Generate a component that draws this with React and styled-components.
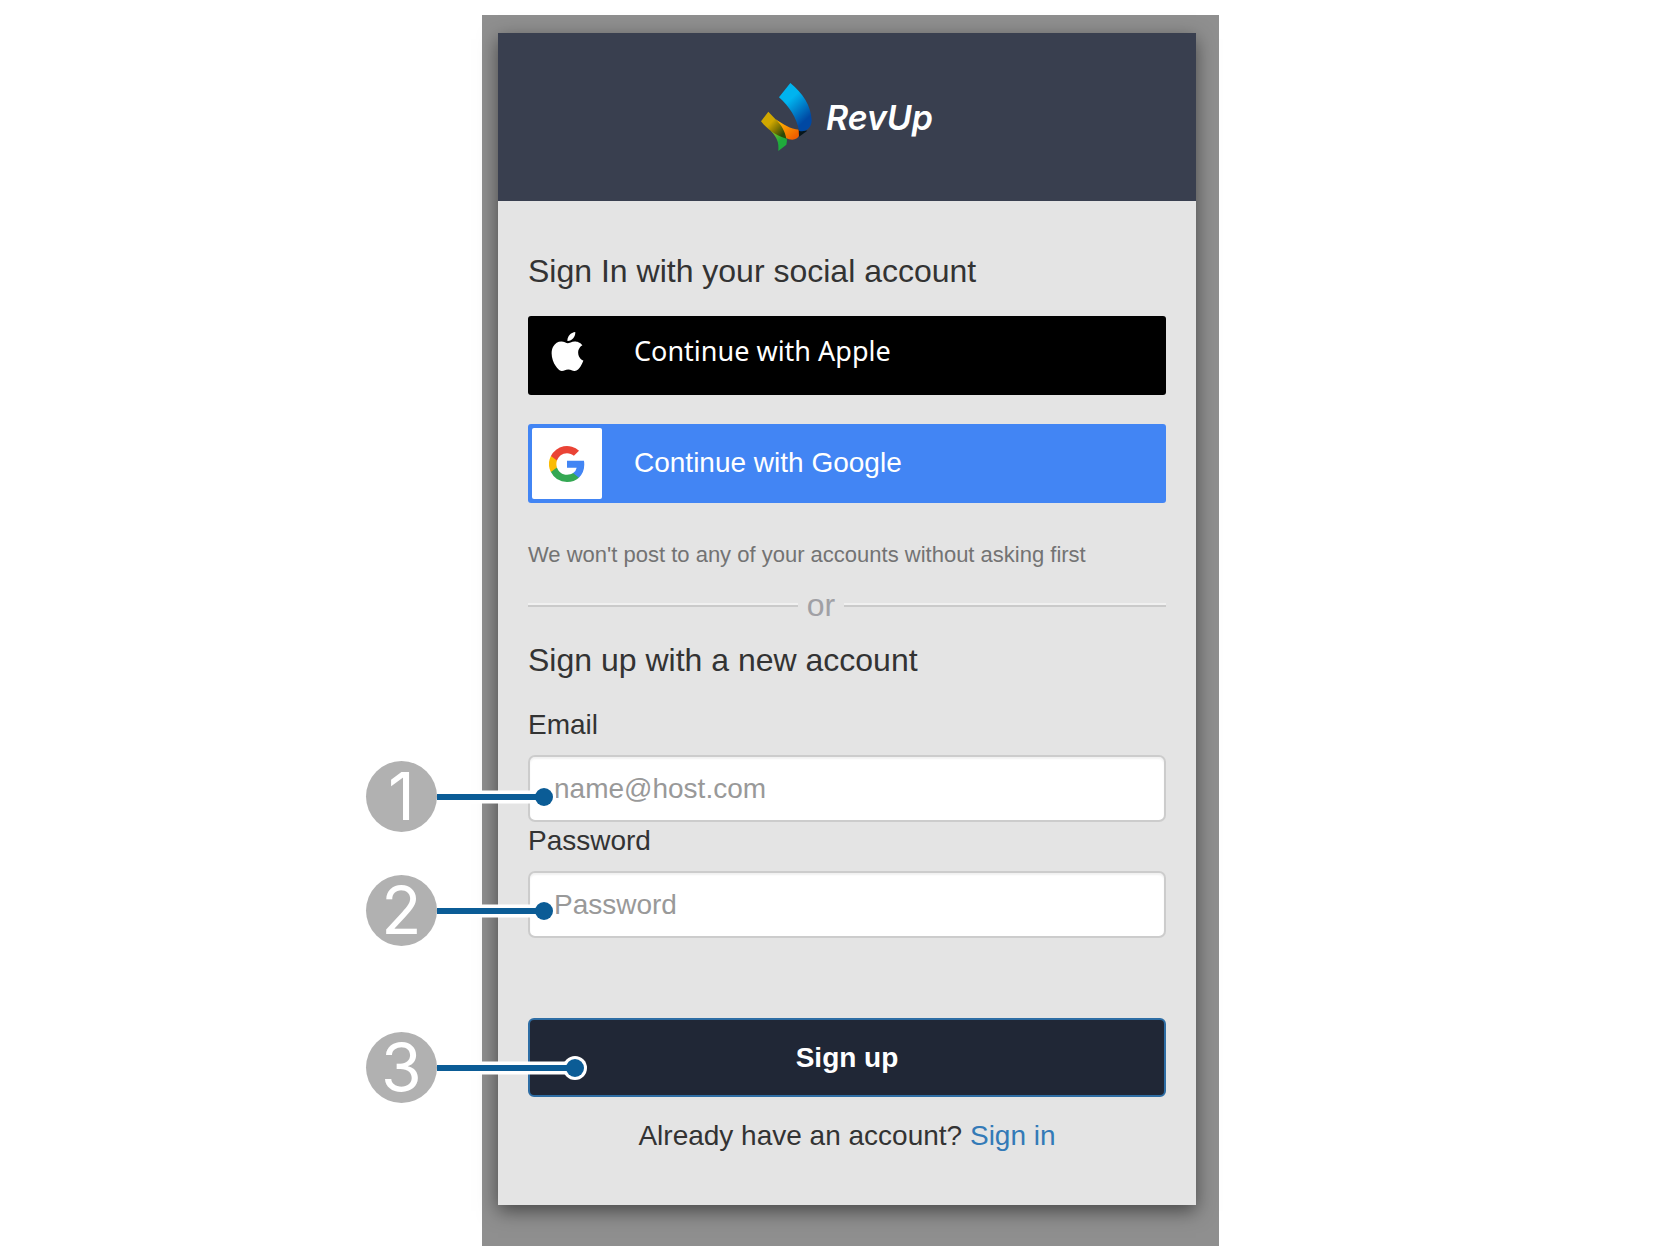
import React, { useState } from "react";
import styled, { createGlobalStyle } from "styled-components";
import { SiApple } from "react-icons/si";

const colors = {
  backdrop: "#8f8f8f",
  header: "#393f4f",
  panel: "#e4e4e4",
  text: "#333333",
  muted: "#737373",
  placeholder: "#999999",
  border: "#cccccc",
  google: "#4285f4",
  navy: "#202736",
  link: "#337ab7",
  pointer: "#0b5c96",
  badge: "#b1b1b1",
};

const sans = `"Liberation Sans", Arial, sans-serif`;

const GlobalStyle = createGlobalStyle`
  *, *::before, *::after {
    box-sizing: border-box;
  }

  body {
    margin: 0;
    background-color: white;
    color: ${colors.text};
    font-family: ${sans};
  }
`;

const Page = styled.main`
  display: grid;
  grid-template-columns: 482fr 737fr 449fr;
  padding-top: 15px;
`;

const Backdrop = styled.div`
  grid-column: 2;
  padding: 18px 23px 41px 16px;
  background-color: ${colors.backdrop};
`;

const Card = styled.section`
  background-color: ${colors.panel};
  box-shadow: 0 6px 18px rgba(0, 0, 0, 0.5);
`;

const Header = styled.header`
  display: flex;
  align-items: center;
  justify-content: center;
  gap: 14px;
  height: 168px;
  background-color: ${colors.header};
`;

const Brand = styled.span`
  padding-top: 2px;
  color: white;
  font-family: Inter, sans-serif;
  font-size: 34px;
  font-style: italic;
  font-weight: 600;
  line-height: 40px;
`;

const Body = styled.div`
  padding: 48px 30px 50px;
`;

const Title = styled.h2`
  margin: 0;
  font-size: 32px;
  font-weight: normal;
  line-height: 44px;
`;

const SocialButtons = styled.div`
  display: flex;
  flex-direction: column;
  gap: 29px;
  margin: 23px 0 36px;
`;

const SocialButton = styled.button`
  display: flex;
  align-items: center;
  gap: 32px;
  width: 100%;
  height: 79px;
  padding: 4px;
  border: none;
  border-radius: 3px;
  background-color: ${(props) => props.$color};
  color: white;
  font-family: ${(props) => props.$font || sans};
  font-size: ${(props) => (props.$font ? "27px" : "28px")};
  cursor: pointer;
`;

const SocialIcon = styled.span`
  display: flex;
  align-items: center;
  justify-content: center;
  width: 70px;
  height: 71px;
  padding-bottom: ${(props) => (props.$raised ? "8px" : "0")};
  border-radius: 2px;
  background-color: ${(props) => props.$color || "transparent"};
`;

const SocialLabel = styled.span`
  padding-bottom: ${(props) => (props.$raised ? "10px" : "2px")};
`;

const Note = styled.p`
  margin: 0;
  color: ${colors.muted};
  font-size: 22px;
  line-height: 32px;
`;

const Divider = styled.div`
  display: flex;
  align-items: center;
  gap: 9px;
  margin: 17px 0 16px;
  color: #a0a0a5;
  font-size: 32px;
  line-height: 34px;
`;

const Rule = styled.span`
  flex: ${(props) => props.$grow} 1 0;
  height: 4px;
  border-top: 2px solid #f0f0f0;
  border-bottom: 2px solid #cacaca;
`;

const Form = styled.form`
  margin-top: 24px;
`;

const Label = styled.label`
  display: block;
  margin-bottom: 11px;
  font-size: 28px;
  line-height: 38px;
`;

// anchors a callout to the control it points at
const Anchor = styled.div`
  position: relative;
`;

const SubmitRow = styled(Anchor)`
  margin-top: 80px;
`;

const Input = styled.input`
  display: block;
  width: 100%;
  height: 67px;
  padding: 0 24px;
  border: 2px solid ${colors.border};
  border-radius: 7px;
  background-color: white;
  box-shadow: inset 0 2px 2px rgba(0, 0, 0, 0.06);
  color: ${colors.text};
  font-family: ${sans};
  font-size: 28px;

  &::placeholder {
    color: ${colors.placeholder};
    opacity: 1;
  }
`;

const Submit = styled.button`
  display: block;
  width: 100%;
  height: 79px;
  border: 2px solid #2e6da4;
  border-radius: 6px;
  background-color: ${colors.navy};
  color: white;
  font-family: ${sans};
  font-size: 28px;
  font-weight: bold;
  cursor: pointer;
`;

const Footer = styled.p`
  margin: 20px 0 0;
  font-size: 28px;
  line-height: 38px;
  text-align: center;
`;

const Link = styled.a`
  color: ${colors.link};
  text-decoration: none;
`;

const CalloutBox = styled.div`
  position: absolute;
  left: -162px;
  top: ${(props) => props.$top}px;
  display: flex;
  align-items: center;
  pointer-events: none;
`;

const Badge = styled.span`
  display: flex;
  align-items: center;
  justify-content: center;
  width: 71px;
  height: 71px;
  border-radius: 50%;
  background-color: ${colors.badge};
  color: white;
  font-family: Inter, sans-serif;
  font-size: 66px;
  line-height: 71px;
`;

const Callout = ({ number, top, length }) => (
  <CalloutBox $top={top}>
    <Badge>{number}</Badge>
    <svg width={length + 12} height="26" viewBox={`0 0 ${length + 12} 26`}>
      <path d={`M0 13H${length}`} stroke="white" strokeWidth="13" />
      <circle cx={length} cy="13" r="12" fill="white" />
      <path d={`M0 13H${length}`} stroke={colors.pointer} strokeWidth="6" />
      <circle cx={length} cy="13" r="9" fill={colors.pointer} />
    </svg>
  </CalloutBox>
);

const RevUpMark = () => (
  <svg width="51" height="69" viewBox="63 35 153 207" aria-hidden="true">
    <defs>
      <linearGradient id="blue" x1="0.3" y1="0.2" x2="0.8" y2="1">
        <stop offset="0.15" stopColor="#00b4ef" />
        <stop offset="0.8" stopColor="#0048a3" />
      </linearGradient>
      <linearGradient id="gold" x1="0.1" y1="0.2" x2="0.8" y2="0.9">
        <stop offset="0.35" stopColor="#cfa700" />
        <stop offset="0.65" stopColor="#8a7b00" />
        <stop offset="1" stopColor="#2c4a06" />
      </linearGradient>
      <linearGradient id="orange" x1="0" y1="0" x2="1" y2="1">
        <stop offset="0.15" stopColor="#ffb400" />
        <stop offset="0.85" stopColor="#f05f00" />
      </linearGradient>
      <linearGradient id="green" x1="0" y1="0" x2="0.7" y2="0.8">
        <stop offset="0" stopColor="#8fc31f" />
        <stop offset="0.7" stopColor="#1fab3c" />
      </linearGradient>
    </defs>
    <path d="M93 179C112 200 117 214 115 239L139 220Q142 210 140 196L120 184Z" fill="url(#green)" />
    <path d="M106 143C130 158 150 174 178 175V192Q171 205 157 205Q146 205 138 200Q132 180 106 143Z" fill="url(#orange)" />
    <path d="M85 121L63 150C78 168 98 189 139 202C136 182 125 160 108 145Z" fill="url(#gold)" />
    <path d="M176 174L202 178L177 196Z" fill="#07161b" />
    <path d="M151 35L117 78C148 106 170 139 177 178Q191 183 204 173Q215 163 215 146C213 104 189 66 151 35Z" fill="url(#blue)" />
  </svg>
);

const GoogleMark = () => (
  <svg width="36" height="36" viewBox="0 0 18 18" aria-hidden="true">
    <path fill="#4285f4" d="M17.64 9.2c0-.64-.06-1.25-.16-1.84H9v3.49h4.84a4.14 4.14 0 0 1-1.8 2.71v2.26h2.92c1.7-1.57 2.68-3.88 2.68-6.62z" />
    <path fill="#34a853" d="M9 18c2.43 0 4.47-.8 5.96-2.18l-2.92-2.26c-.8.54-1.84.86-3.04.86-2.34 0-4.32-1.58-5.03-3.71H.96v2.33A9 9 0 0 0 9 18z" />
    <path fill="#fbbc05" d="M3.97 10.71a5.4 5.4 0 0 1 0-3.42V4.96H.96a9 9 0 0 0 0 8.08l3.01-2.33z" />
    <path fill="#ea4335" d="M9 3.58c1.32 0 2.5.45 3.44 1.35l2.58-2.59A9 9 0 0 0 .96 4.96l3.01 2.33C4.68 5.16 6.66 3.58 9 3.58z" />
  </svg>
);

const App = () => {
  const [email, setEmail] = useState("");
  const [password, setPassword] = useState("");

  function handleSubmit(e) {
    e.preventDefault();
  }

  return (
    <>
      <GlobalStyle />
      <Page>
        <Backdrop>
          <Card>
            <Header>
              <RevUpMark />
              <Brand>RevUp</Brand>
            </Header>
            <Body>
              <Title>Sign In with your social account</Title>
              <SocialButtons>
                <SocialButton
                  type="button"
                  $color="black"
                  $font={`"Noto Sans", sans-serif`}
                >
                  <SocialIcon $raised>
                    <SiApple size={39} />
                  </SocialIcon>
                  <SocialLabel $raised>Continue with Apple</SocialLabel>
                </SocialButton>
                <SocialButton type="button" $color={colors.google}>
                  <SocialIcon $color="white">
                    <GoogleMark />
                  </SocialIcon>
                  <SocialLabel>Continue with Google</SocialLabel>
                </SocialButton>
              </SocialButtons>
              <Note>We won't post to any of your accounts without asking first</Note>
              <Divider>
                <Rule $grow={269} />
                <span>or</span>
                <Rule $grow={321} />
              </Divider>
              <Title>Sign up with a new account</Title>
              <Form onSubmit={handleSubmit}>
                <Label htmlFor="email">Email</Label>
                <Anchor>
                  <Input
                    id="email"
                    type="email"
                    placeholder="name@host.com"
                    value={email}
                    onChange={(e) => setEmail(e.target.value)}
                  />
                  <Callout number={1} top={6} length={107} />
                </Anchor>
                <Label htmlFor="password">Password</Label>
                <Anchor>
                  <Input
                    id="password"
                    type="password"
                    placeholder="Password"
                    value={password}
                    onChange={(e) => setPassword(e.target.value)}
                  />
                  <Callout number={2} top={4} length={107} />
                </Anchor>
                <SubmitRow>
                  <Submit type="submit">Sign up</Submit>
                  <Callout number={3} top={14} length={138} />
                </SubmitRow>
              </Form>
              <Footer>
                Already have an account? <Link href="#signin">Sign in</Link>
              </Footer>
            </Body>
          </Card>
        </Backdrop>
      </Page>
    </>
  );
};

export default App;
